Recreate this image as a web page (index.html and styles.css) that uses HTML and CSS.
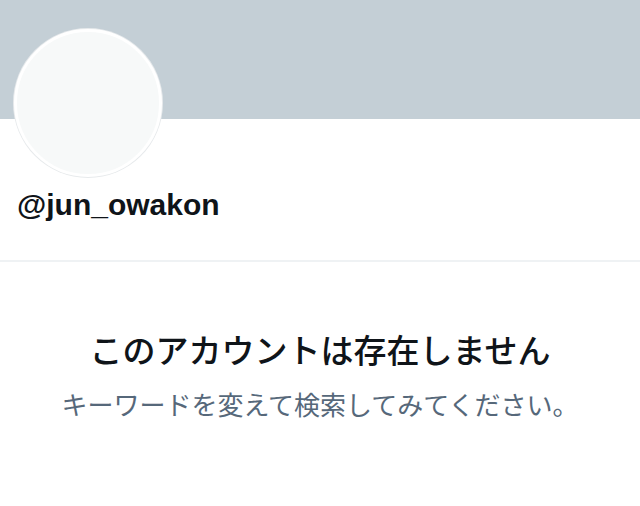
FILE: index.html
```html
<!DOCTYPE html>
<html lang="ja">
<head>
<meta charset="utf-8">
<link rel="stylesheet" href="styles.css">
</head>
<body>
<div class="page">
  <div class="banner"></div>
  <div class="profile">
    <div class="avatar"></div>
    <div class="handle">@jun_owakon</div>
  </div>
  <div class="empty">
    <div class="title">このアカウントは存在しません</div>
    <div class="sub">キーワードを変えて検索してみてください。</div>
  </div>
</div>
</body>
</html>
```
FILE: styles.css
```css
html, body {
  margin: 0;
  padding: 0;
  background: #ffffff;
}
.page {
  width: 640px;
  height: 506px;
  overflow: hidden;
  font-family: "Liberation Sans", "Noto Sans CJK JP", sans-serif;
}
.banner {
  height: 119px;
  background: #c4cfd6;
}
.profile {
  display: flex;
  flex-direction: column;
  align-items: flex-start;
  padding-left: 14px;
  height: 141px;
  border-bottom: 2px solid #eff2f4;
}
.avatar {
  width: 142px;
  height: 142px;
  margin-top: -90px;
  border-radius: 50%;
  background: #f7f9f9;
  border: 3px solid #ffffff;
  box-shadow: 0 0 0 1px #e7eaec;
}
.handle {
  margin-top: 10px;
  margin-left: 3px;
  font-size: 30px;
  line-height: 36px;
  font-weight: 700;
  color: #0f1419;
}
.empty {
  text-align: center;
  padding-top: 65px;
}
.title {
  font-family: "Noto Sans CJK JP", sans-serif;
  font-size: 33px;
  line-height: 44px;
  font-weight: 500;
  color: #0f1419;
}
.sub {
  margin-top: 17px;
  font-family: "Noto Sans CJK JP", sans-serif;
  font-size: 26px;
  line-height: 32px;
  color: #56687a;
}
```
